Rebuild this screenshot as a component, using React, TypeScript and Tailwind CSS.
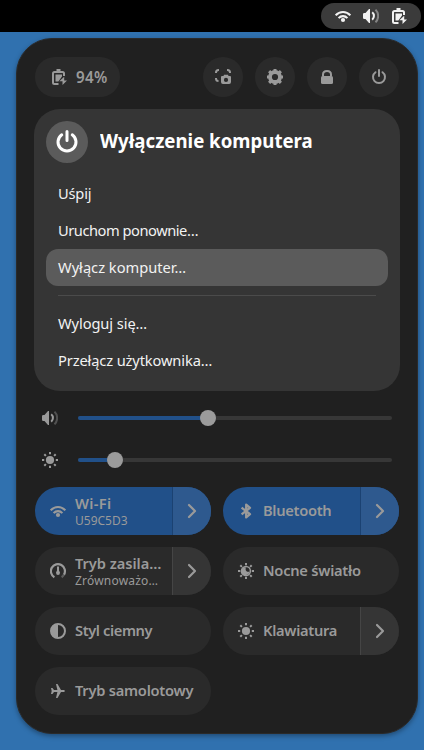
import type { ReactNode } from 'react';

function Icon({ children, size = 16, className = '' }: { children: ReactNode; size?: number; className?: string }) {
  return (
    <svg width={size} height={size} viewBox="0 0 16 16" fill="currentColor" className={`shrink-0 ${className}`}>
      {children}
    </svg>
  );
}

const line = { fill: 'none', stroke: 'currentColor', strokeWidth: 2 } as const;

const Wifi = () => (
  <Icon>
    <path d="M.7 7.3C4.7 2.9 11.3 2.9 15.3 7.3M3.6 10.1c2.4-2.7 6.4-2.7 8.8 0" {...line} strokeWidth="2.1" />
    <circle cx="8" cy="12" r="2.1" />
  </Icon>
);

const Volume = () => (
  <Icon>
    <path d="M0 6.3Q0 5 1.3 5H2.5L6 1h1v14H6l-3.5-4H1.3Q0 11 0 9.7z" />
    <path d="M9.2 4.3c2.3 2 2.3 5.4 0 7.4" {...line} />
    <path d="M12.5 1.6c3.5 3.5 3.5 9.3 0 12.8" {...line} opacity=".4" />
  </Icon>
);

const Battery = () => (
  <Icon>
    <path d="M7.5 15H3.5Q2 15 2 13.5v-9Q2 3 3.5 3h8Q13 3 13 4.5V7" {...line} />
    <path d="M5.5 0h4v3h-4zM4.5 5.5H11v2l-3.6 5H4.5z" />
    <path d="M13.2 7.8v3.7H16L11.5 16v-3.8H8.3z" />
  </Icon>
);

const Screenshot = () => (
  <Icon>
    <path d="M1 4V3.5Q1 1 3.5 1H4M12 1h.5Q15 1 15 3.5V4M1 9v.5Q1 12 3.5 12" {...line} />
    <path fillRule="evenodd" d="M8.5 7 9 5.7h4l.5 1.3H15q1 0 1 1v5q0 2-2 2H8q-2 0-2-2V8q0-1 1-1zM11 8.8a2.1 2.1 0 1 0 0 4.2 2.1 2.1 0 0 0 0-4.2" />
  </Icon>
);

const Gear = () => (
  <Icon>
    <circle cx="8" cy="8" r="5" fill="none" stroke="currentColor" strokeWidth="3.8" />
    <path d="M8 0v3M8 13v3M0 8h3M13 8h3M2.1 2.1l2 2M11.9 11.9l2 2M2.1 13.9l2-2M11.9 4.1l2-2" fill="none" stroke="currentColor" strokeWidth="3" />
  </Icon>
);

const Lock = () => (
  <Icon>
    <path d="M4 7V5.5C4 3.3 5.6 2 8 2s4 1.3 4 3.5V7" {...line} />
    <path d="M3.5 7h9Q14 7 14 8.5v5q0 1.5-1.5 1.5h-9Q2 15 2 13.5v-5Q2 7 3.5 7" />
  </Icon>
);

const Power = ({ size = 16 }: { size?: number }) => (
  <Icon size={size}>
    <path d="M4.5 3.2a6 6 0 1 0 7 0M8 1v6" {...line} strokeLinecap="round" />
  </Icon>
);

const Rays = () => (
  <path d="M8 0v2.2M8 13.8V16M0 8h2.2M13.8 8H16M2.3 2.3l1.6 1.6M12.1 12.1l1.6 1.6M2.3 13.7l1.6-1.6M12.1 3.9l1.6-1.6" {...line} />
);

const Sun = () => (
  <Icon>
    <circle cx="8" cy="8" r="4.1" />
    <Rays />
  </Icon>
);

const NightLight = () => (
  <Icon>
    <Rays />
    <circle cx="8" cy="8" r="4.4" {...line} strokeWidth="1.5" />
    <path d="M8 4.5C6.8 7.2 8.5 9.5 11.8 8.6 11 11.2 9.5 12 8 12a4 4 0 1 1 0-7.5" />
  </Icon>
);

const Gauge = () => (
  <Icon>
    <path d="M4.4 14.2A7 7 0 1 1 14 11.6" {...line} strokeWidth="2.2" />
    <path d="M14 11.6A7 7 0 0 1 11.6 14.2" {...line} strokeWidth="2.2" opacity=".45" />
    <path d="M7 3.5h2v4L10 9.5Q10 12 8 12T6 9.5l1-2z" />
  </Icon>
);

const Bluetooth = () => (
  <Icon>
    <path d="M3.6 4.6 12 11.2 8.2 14.4V1.6L12 4.8 3.6 11.4" {...line} strokeWidth="2.3" strokeLinejoin="round" />
  </Icon>
);

const DarkStyle = () => (
  <Icon>
    <circle cx="8" cy="8" r="7" {...line} />
    <path d="M8 1a7 7 0 0 0 0 14z" />
  </Icon>
);

const Plane = () => (
  <Icon>
    <path d="M6 1h1.5L11 7h2.8q1.2.4 1.2 1t-1.2 1H11l-3.5 6H6l1.4-6H4L2.5 11H1l.7-3L1 5h1.5L4 7h3.4z" />
  </Icon>
);

const Chevron = () => (
  <Icon>
    <path d="M5 2l6 6-6 6" {...line} strokeWidth="2.2" strokeLinejoin="round" strokeLinecap="round" />
  </Icon>
);

function RoundButton({ children }: { children: ReactNode }) {
  return <button className="flex size-10 items-center justify-center rounded-full bg-[#2a2a2a]">{children}</button>;
}

function MenuItem({ label, track = '', active = false }: { label: string; track?: string; active?: boolean }) {
  return (
    <div className={`flex h-[37px] items-center rounded-xl px-3 text-[14.67px] leading-none whitespace-nowrap text-[#f2f2f2] ${active ? 'bg-[#5b5b5b]' : ''}`}>
      <span className={track}>{label}</span>
    </div>
  );
}

function Slider({ icon, value }: { icon: ReactNode; value: number }) {
  return (
    <div className="flex h-[42px] items-center px-2">
      {icon}
      <div className="relative ml-5 h-1 flex-1 rounded-full bg-[#373737]">
        <div className="h-full rounded-full bg-[#215089]" style={{ width: value }} />
        <div className="absolute -top-1.5 size-4 -translate-x-1/2 rounded-full bg-[#9b9b9b]" style={{ left: value }} />
      </div>
    </div>
  );
}

type ToggleProps = { icon: ReactNode; label: string; track: string; sub?: string; subTrack?: string; on?: boolean; menu?: boolean };

function Toggle({ icon, label, track, sub, subTrack = '', on = false, menu = false }: ToggleProps) {
  return (
    <div className={`flex h-12 overflow-hidden rounded-full whitespace-nowrap ${on ? 'bg-[#215089]' : 'bg-[#2a2a2a]'}`}>
      <div className="flex min-w-0 flex-1 items-center gap-[9px] pl-[15px]">
        {icon}
        <div className={sub ? 'pt-0.5' : 'pb-0.5'}>
          <div className={`text-[14.67px] font-semibold ${sub ? 'leading-[17px]' : 'leading-[18px]'} ${track}`}>{label}</div>
          {sub && <div className={`text-[12px] leading-[17px] ${subTrack}`}>{sub}</div>}
        </div>
      </div>
      {menu && (
        <div className={`flex w-[39px] items-center justify-center border-l ${on ? 'border-[#1b4272] bg-[#2e598e]' : 'border-[#454545] bg-[#353535]'}`}>
          <Chevron />
        </div>
      )}
    </div>
  );
}

export default function App() {
  return (
    <div className="flex h-[750px] w-[424px] flex-col overflow-hidden bg-[#3071af] font-['Noto_Sans',sans-serif] text-[#9a9a9a]">
      <header className="flex h-8 shrink-0 items-center justify-end bg-black pr-[3px]">
        <div className="flex h-[26px] w-[100px] items-center gap-3 rounded-full bg-[#3b3b3b] pl-[14px] text-[#f2f2f2]">
          <Wifi />
          <Volume />
          <Battery />
        </div>
      </header>
      <main className="mt-1.5 ml-4 h-[696px] w-[402px] shrink-0 rounded-[36px] border border-[#2a2a2a] bg-[#202020] px-[17px] pt-[18px] shadow-[0_2px_5px_rgba(0,0,0,0.35)]">
        <div className="flex justify-between px-px">
          <div className="flex h-10 w-[85px] items-center gap-[9px] rounded-full bg-[#2a2a2a] pl-4">
            <Battery />
            <span className="text-[15.2px] font-semibold tracking-[0.3px]">94%</span>
          </div>
          <div className="flex gap-3">
            <RoundButton><Screenshot /></RoundButton>
            <RoundButton><Gear /></RoundButton>
            <RoundButton><Lock /></RoundButton>
            <RoundButton><Power /></RoundButton>
          </div>
        </div>

        <section className="mt-3 h-[282px] rounded-[26px] bg-[#353535] p-3">
          <div className="mb-3 flex h-[42px] items-center gap-3 text-white">
            <div className="flex size-[42px] items-center justify-center rounded-full bg-[#5b5b5b]">
              <Power size={24} />
            </div>
            <h1 className="origin-left scale-x-[0.932] pb-0.5 text-[20px] leading-none font-bold whitespace-nowrap">Wyłączenie komputera</h1>
          </div>
          <MenuItem label="Uśpij" track="tracking-[-0.2px]" />
          <MenuItem label="Uruchom ponownie…" track="tracking-[-0.47px]" />
          <MenuItem label="Wyłącz komputer…" active />
          <div className="mx-3 my-[9px] h-px bg-[#4b4b4b]" />
          <MenuItem label="Wyloguj się…" track="tracking-[-0.08px]" />
          <MenuItem label="Przełącz użytkownika…" track="tracking-[-0.13px]" />
        </section>

        <div className="mt-1.5 mb-1.5">
          <Slider icon={<Volume />} value={130} />
          <Slider icon={<Sun />} value={37} />
        </div>

        <div className="grid grid-cols-2 gap-3 px-px">
          <Toggle icon={<Wifi />} label="Wi-Fi" track="tracking-[0.3px]" sub="U59C5D3" on menu />
          <Toggle icon={<Bluetooth />} label="Bluetooth" track="tracking-[-0.3px]" on menu />
          <Toggle icon={<Gauge />} label="Tryb zasila…" track="tracking-[-0.05px]" sub="Zrównoważo…" subTrack="tracking-[0.2px]" menu />
          <Toggle icon={<NightLight />} label="Nocne światło" track="tracking-[-0.25px]" />
          <Toggle icon={<DarkStyle />} label="Styl ciemny" track="tracking-[-0.4px]" />
          <Toggle icon={<Sun />} label="Klawiatura" track="tracking-[-0.3px]" menu />
          <Toggle icon={<Plane />} label="Tryb samolotowy" track="tracking-[-0.25px]" />
        </div>
      </main>
    </div>
  );
}
